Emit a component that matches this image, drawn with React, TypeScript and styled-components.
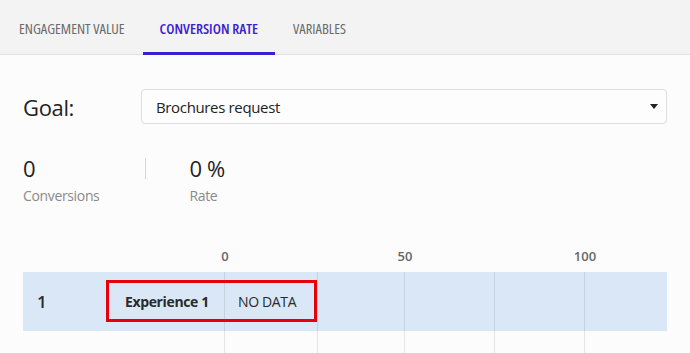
import React from "react";
import styled, { createGlobalStyle } from "styled-components";

const Global = createGlobalStyle`
  html, body { margin: 0; padding: 0; background: #fcfcfc; }
  body { font-family: "Open Sans", "Noto Sans", sans-serif; overflow: hidden; letter-spacing: -0.35px; }
`;

const Page = styled.div`
  width: 690px;
  height: 353px;
  overflow: hidden;
  background: #fcfcfc;
`;

const TabBar = styled.div`
  height: 54px;
  display: flex;
  align-items: stretch;
  padding-left: 2px;
  background: #f3f3f3;
  border-bottom: 1px solid #e2e2e2;
`;

const Tab = styled.div<{ $active?: boolean }>`
  display: flex;
  align-items: center;
  padding: 0 17px;
  margin-right: 1px;
  font-size: 14.5px;
  font-stretch: 75%;
  letter-spacing: 0;
  text-transform: uppercase;
  color: ${(p) => (p.$active ? "#3b20d2" : "#6a6a6a")};
  font-weight: ${(p) => (p.$active ? 550 : 400)};
  box-shadow: ${(p) => (p.$active ? "inset 0 -3px 0 #3b20d2" : "none")};
  position: relative;
  top: 1px;
`;

const Content = styled.div`
  padding: 34px 23px 0 23px;
`;

const GoalRow = styled.div`
  display: flex;
  align-items: center;
  height: 35px;
`;

const GoalLabel = styled.div`
  width: 118px;
  font-size: 22px;
  color: #222;
`;

const Select = styled.div`
  flex: 1;
  height: 33px;
  border: 1px solid #dedede;
  border-radius: 4px;
  background: #fdfdfd;
  display: flex;
  align-items: center;
  justify-content: space-between;
  padding: 0 8px 0 14px;
  font-size: 15px;
  color: #222;
`;

const Caret = styled.span`
  width: 0;
  height: 0;
  border-left: 4.5px solid transparent;
  border-right: 4.5px solid transparent;
  border-top: 5px solid #222;
  margin-top: -1px;
`;

const Stats = styled.div`
  display: flex;
  align-items: flex-start;
  margin-top: 29px;
`;

const Stat = styled.div`
  display: flex;
  flex-direction: column;
`;

const StatValue = styled.div`
  font-size: 22px;
  line-height: 30px;
  color: #222;
`;

const StatLabel = styled.div`
  font-size: 14px;
  line-height: 20px;
  margin-top: 3px;
  color: #8a8a8a;
`;

const Divider = styled.div`
  width: 1px;
  height: 21px;
  margin: 5px 43px 0 46px;
  background: #d6d6d6;
`;

const Chart = styled.div`
  margin-top: 30px;
  display: grid;
  grid-template-columns: 201px 443px;
  grid-template-rows: 36px 59px 60px;
  position: relative;
`;

const Axis = styled.div`
  grid-column: 2;
  grid-row: 1;
  position: relative;
`;

const Tick = styled.span`
  position: absolute;
  top: 11px;
  transform: translateX(-50%);
  font-size: 13px;
  font-weight: 600;
  letter-spacing: 0;
  color: #666;
`;

const Band = styled.div`
  grid-column: 1 / 3;
  grid-row: 2;
  background: #d9e7f6;
  display: grid;
  grid-template-columns: 201px 1fr;
  align-items: center;
`;

const LabelCell = styled.div`
  display: flex;
  align-items: center;
  justify-content: space-between;
  padding: 0 15px 0 14px;
`;

const Rank = styled.span`
  font-size: 17px;
  font-weight: 600;
  color: #2a2a2a;
`;

const Name = styled.span`
  font-size: 14px;
  font-weight: 700;
  color: #2a2a2a;
`;

const NoData = styled.span`
  padding-left: 14px;
  font-size: 14px;
  color: #2a2a2a;
`;

const Grid = styled.div`
  grid-column: 2;
  grid-row: 2 / 4;
  position: relative;
  pointer-events: none;
`;

const GridLine = styled.div`
  position: absolute;
  top: 0;
  bottom: 0;
  width: 1px;
  background: rgba(0, 0, 0, 0.09);
`;

const Highlight = styled.div`
  position: absolute;
  left: 83px;
  top: 44px;
  width: 205px;
  height: 36px;
  border: 3px solid #e5000b;
`;

const ticks = [0, 50, 100];
const lines = [0, 25, 50, 75, 100];
const pxPerUnit = 3.6;

export default function App() {
  return (
    <Page>
      <Global />
      <TabBar>
        <Tab>Engagement Value</Tab>
        <Tab $active>Conversion Rate</Tab>
        <Tab>Variables</Tab>
      </TabBar>
      <Content>
        <GoalRow>
          <GoalLabel>Goal:</GoalLabel>
          <Select>
            <span>Brochures request</span>
            <Caret />
          </Select>
        </GoalRow>
        <Stats>
          <Stat>
            <StatValue>0</StatValue>
            <StatLabel>Conversions</StatLabel>
          </Stat>
          <Divider />
          <Stat>
            <StatValue>0 %</StatValue>
            <StatLabel>Rate</StatLabel>
          </Stat>
        </Stats>
        <Chart>
          <Axis>
            {ticks.map((t) => (
              <Tick key={t} style={{ left: t * pxPerUnit + 1 }}>
                {t}
              </Tick>
            ))}
          </Axis>
          <Band>
            <LabelCell>
              <Rank>1</Rank>
              <Name>Experience 1</Name>
            </LabelCell>
            <NoData>NO DATA</NoData>
          </Band>
          <Grid>
            {lines.map((l) => (
              <GridLine key={l} style={{ left: l * pxPerUnit + (l === 25 ? 3 : 0) }} />
            ))}
          </Grid>
          <Highlight />
        </Chart>
      </Content>
    </Page>
  );
}
